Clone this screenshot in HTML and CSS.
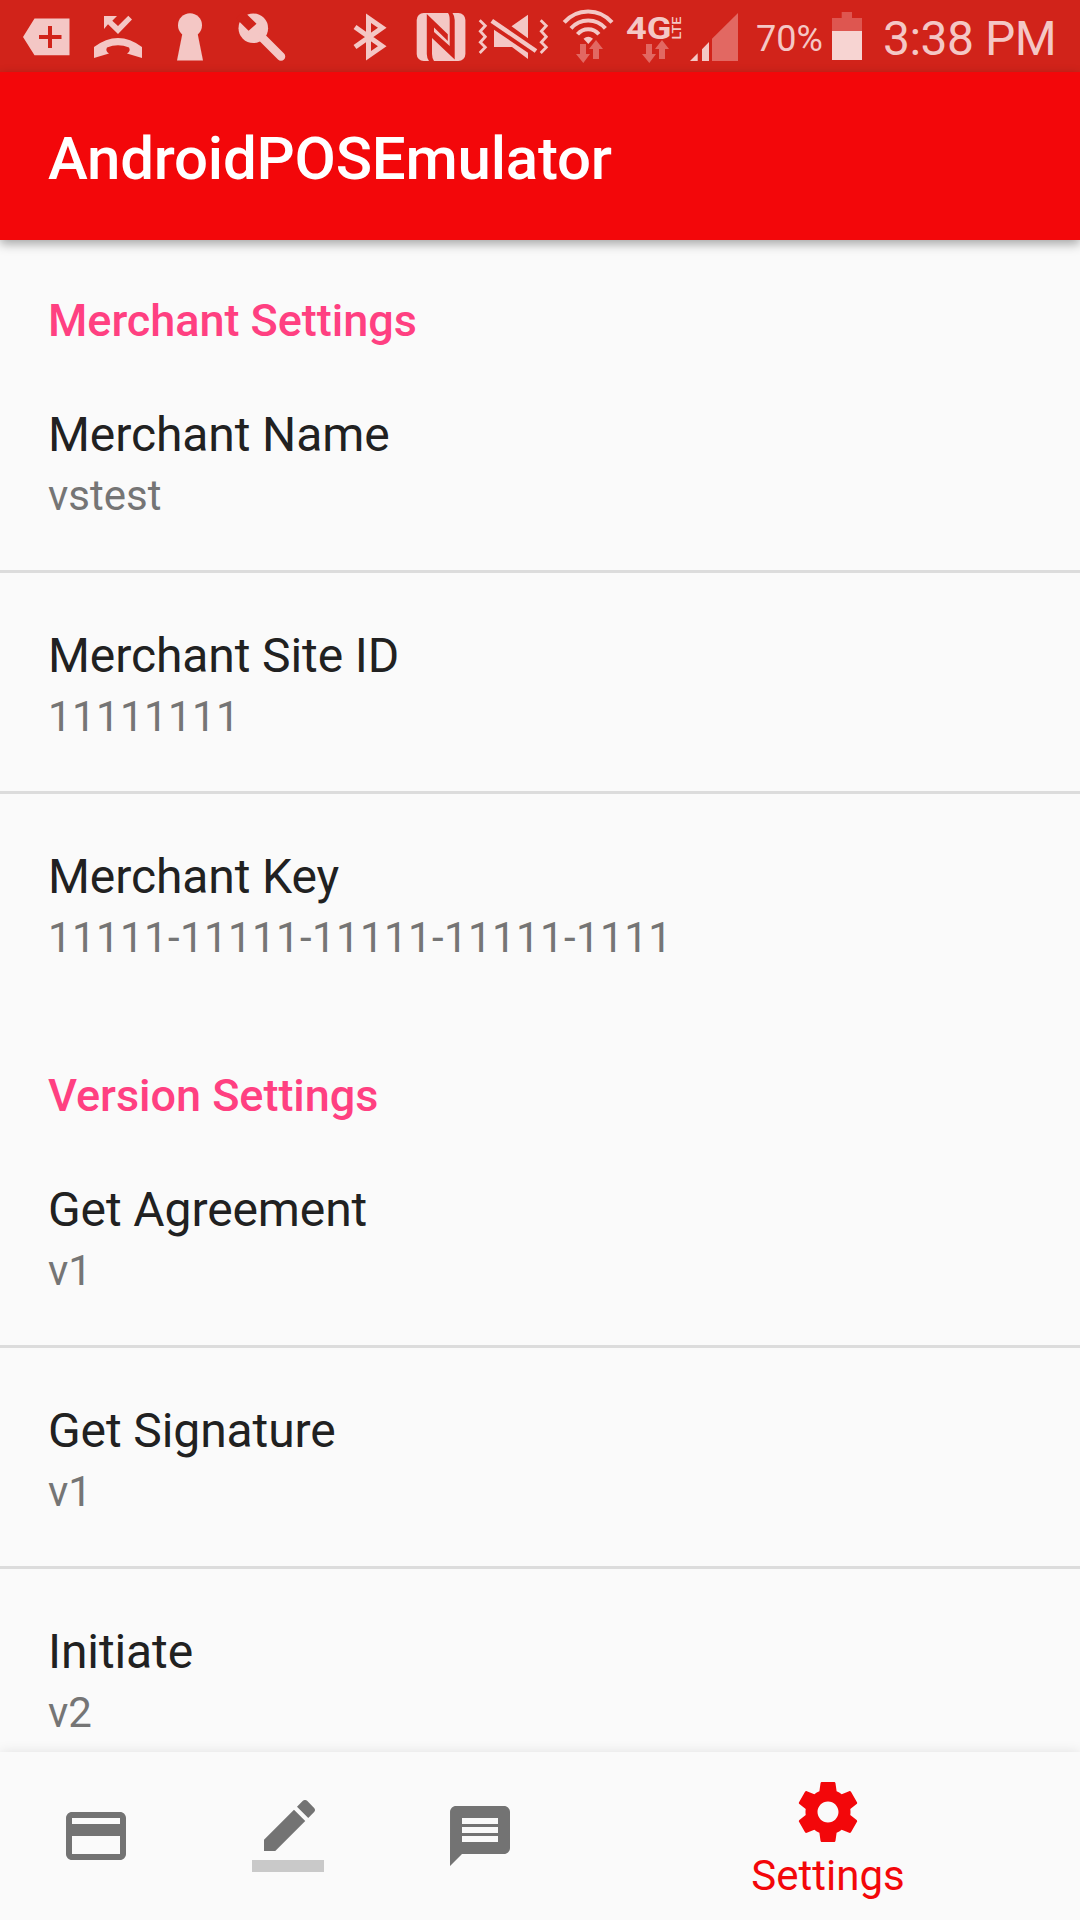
FILE: index.html
```html
<!DOCTYPE html>
<html lang="en">
<head>
<meta charset="utf-8">
<title>AndroidPOSEmulator</title>
<link rel="stylesheet" href="styles.css">
</head>
<body>
<div class="screen">
  <header class="status-bar">
    <svg class="status-icon" width="85" height="72" viewBox="0 0 85 72"><path fill-rule="evenodd" d="M23 37 34.5 18.5H69.5V55.3H34.5ZM48 26V35H39V39H48V48H52V39H61.5V35H52V26Z"/></svg>
    <svg class="status-icon" width="75" height="72" viewBox="85 0 75 72"><path d="M104 16H117L112.3 20.7 118 26 128.3 15.7 132 19.5 118 34 108 24.2 104 29Z"/><path d="M94 58V47Q118 29 142 47V58L127 53.5Q131 51 129 47.5Q118 43 107 47.5Q105 51 109 53.5Z"/></svg>
    <svg class="status-icon" width="60" height="72" viewBox="160 0 60 72"><circle cx="190" cy="25.3" r="12"/><path d="M182.5 33H197.5L203 60.5H177Z"/></svg>
    <svg class="status-icon" width="110" height="72" viewBox="220 0 110 72"><circle cx="253.3" cy="28.3" r="14.8"/><path class="stroke" stroke-width="8.5" stroke-linecap="round" d="M262 37.5 281 56.5"/><path class="cutout" d="M240.2 22.5 248.6 30.7 256.5 23.7 247.3 14.7 246 10 236 18Z"/></svg>
    <svg class="status-icon" width="70" height="72" viewBox="330 0 70 72"><path class="stroke" stroke-width="5" d="M355 47 382.2 27.8 368.5 18.2V55.8L382.2 46.2 355 27"/></svg>
    <svg class="status-icon" width="75" height="72" viewBox="400 0 75 72"><rect x="416.7" y="13" width="48.7" height="48" rx="7"/><path class="cutout" d="M426.8 14 447.8 34.3V41L434 27.5V32L449.7 46V20Q449.7 15 448 13H452.5Q454.7 16 454.7 20V59.5L432 38V54Q432 58 434 61H429Q426.8 58 426.8 54Z"/></svg>
    <svg class="status-icon" width="80" height="72" viewBox="475 0 80 72"><path class="stroke" stroke-width="2.8" d="M479.7 20.3 485.3 25.7 480.3 31.3 485.3 36.7 480.3 42.3 485.3 47.3 479.7 53M540.7 20.3 546.3 25.7 541.3 31.3 546.3 36.7 541.3 42.3 546.3 47.3 540.7 53"/><path d="M494 29.7 528 52.8V59L512 47H494ZM511.5 26.3 528 14.7V38.3Z"/><path class="stroke" stroke-width="4.5" d="M491.8 20.8 536 51"/></svg>
    <svg class="status-icon" width="65" height="72" viewBox="555 0 65 72"><path class="stroke" stroke-width="4" d="M564.2 22.4A31.5 31.5 0 0 1 612 22.4M571 28.4A22.7 22.7 0 0 1 605.4 28.4M577.5 34.2A14 14 0 0 1 598.9 34.2"/><path d="M583.5 38.8Q588.3 34.5 593 38.8L588.3 44Z"/><path class="faint" d="M580 44H586V54H590L583.3 63 576 54H580ZM593 59V49H589L596 40 603 49H599V59Z"/></svg>
    <svg class="status-icon" width="65" height="72" viewBox="620 0 65 72"><text class="network" x="626" y="39" textLength="45.5" lengthAdjust="spacingAndGlyphs">4G</text><text class="network-type" transform="translate(681 39.5) rotate(-90)" textLength="23" lengthAdjust="spacingAndGlyphs">LTE</text><path class="faint" d="M646 44H652V54H656L649.3 63 642 54H646ZM659 59V49H655L662 40 669 49H665V59Z"/></svg>
    <svg class="status-icon" width="65" height="72" viewBox="685 0 65 72"><path d="M690 61 697.7 53.3V61ZM702 61V49.3L709 42V61Z"/><path class="faint" d="M712 61V38.7L738 13V61Z"/></svg>
    <span class="battery-level">70%</span>
    <svg class="status-icon" width="48" height="72" viewBox="826 0 48 72"><path class="battery-empty" d="M832 18H841.7V12H852V18H862V31H832Z"/><path class="battery-full" d="M832 31H862V60H832Z"/></svg>
    <span class="clock">3:38 PM</span>
  </header>
  <div class="app-bar"><h1 class="app-title">AndroidPOSEmulator</h1></div>
  <main class="settings">
    <section class="group">
      <h2 class="group-title">Merchant Settings</h2>
      <div class="row"><div class="row-title">Merchant Name</div><div class="row-value">vstest</div></div>
      <div class="row"><div class="row-title">Merchant Site ID</div><div class="row-value numeric">11111111</div></div>
      <div class="row"><div class="row-title">Merchant Key</div><div class="row-value numeric">11111-11111-11111-11111-1111</div></div>
    </section>
    <section class="group">
      <h2 class="group-title">Version Settings</h2>
      <div class="row"><div class="row-title">Get Agreement</div><div class="row-value">v1</div></div>
      <div class="row"><div class="row-title">Get Signature</div><div class="row-value">v1</div></div>
      <div class="row"><div class="row-title">Initiate</div><div class="row-value">v2</div></div>
    </section>
  </main>
  <nav class="bottom-nav">
    <a class="nav-item"><svg class="nav-icon" viewBox="0 0 24 24"><path d="M20 4H4c-1.11 0-1.99.89-1.99 2L2 18c0 1.11.89 2 2 2h16c1.11 0 2-.89 2-2V6c0-1.11-.89-2-2-2zm0 14H4v-6h16v6zm0-10H4V6h16v2z"/></svg></a>
    <a class="nav-item"><svg class="nav-icon" viewBox="0 0 24 24"><path d="M17.75 7L14 3.25l-10 10V17h3.75l10-10zm2.96-2.96c.39-.39.39-1.02 0-1.41L18.37.29c-.39-.39-1.02-.39-1.41 0L15 2.25 18.75 6l1.96-1.96z"/><path fill-opacity=".36" d="M0 20h24v4H0z"/></svg></a>
    <a class="nav-item"><svg class="nav-icon" viewBox="0 0 24 24"><path d="M20 2H4c-1.1 0-1.99.9-1.99 2L2 22l4-4h14c1.1 0 2-.9 2-2V4c0-1.1-.9-2-2-2zm-2 12H6v-2h12v2zm0-3H6V9h12v2zm0-3H6V6h12v2z"/></svg></a>
    <a class="nav-item active"><svg class="nav-icon" viewBox="0 0 24 24"><path d="M19.43 12.98c.04-.32.07-.64.07-.98s-.03-.66-.07-.98l2.11-1.65c.19-.15.24-.42.12-.64l-2-3.46c-.12-.22-.39-.3-.61-.22l-2.49 1c-.52-.4-1.08-.73-1.69-.98l-.38-2.65C14.46 2.18 14.25 2 14 2h-4c-.25 0-.46.18-.49.42l-.38 2.65c-.61.25-1.17.59-1.69.98l-2.49-1c-.23-.09-.49 0-.61.22l-2 3.46c-.13.22-.07.49.12.64l2.11 1.65c-.04.32-.07.65-.07.98s.03.66.07.98l-2.11 1.65c-.19.15-.24.42-.12.64l2 3.46c.12.22.39.3.61.22l2.49-1c.52.4 1.08.73 1.69.98l.38 2.65c.03.24.24.42.49.42h4c.25 0 .46-.18.49-.42l.38-2.65c.61-.25 1.17-.59 1.69-.98l2.49 1c.23.09.49 0 .61-.22l2-3.46c.12-.22.07-.49-.12-.64l-2.11-1.65zM12 15.5c-1.93 0-3.5-1.57-3.5-3.5s1.57-3.5 3.5-3.5 3.5 1.57 3.5 3.5-1.57 3.5-3.5 3.5z"/></svg><span class="nav-label">Settings</span></a>
  </nav>
</div>
</body>
</html>
```
FILE: styles.css
```css
* { box-sizing: border-box; margin: 0; padding: 0; }

body {
  background: #fafafa;
  font-family: Roboto, "Liberation Sans", sans-serif;
}

.screen {
  width: 1080px;
  height: 1920px;
  display: flex;
  flex-direction: column;
  overflow: hidden;
}

.status-bar {
  flex: none;
  height: 72px;
  display: flex;
  background: #d1231a;
  color: #f4c7c5;
}

.status-icon { flex: none; display: block; fill: #f4c7c5; }
.stroke { fill: none; stroke: #f4c7c5; }
.cutout { fill: #d1231a; }
.faint { fill: #e26862; }
.network { font-size: 31px; font-weight: 700; }
.network-type { font-size: 12px; font-weight: 500; }
.battery-empty { fill: #de5650; }
.battery-full { fill: #f7d4d2; }

.battery-level {
  width: 76px;
  padding-left: 6px;
  font-size: 36px;
  line-height: 78px;
  white-space: nowrap;
}

.clock {
  padding-left: 9px;
  font-size: 48px;
  letter-spacing: -.5px;
  line-height: 78px;
  white-space: nowrap;
}

.app-bar {
  flex: none;
  height: 168px;
  display: flex;
  align-items: center;
  padding: 5px 48px 0;
  background: #f3070a;
  box-shadow: 0 4px 10px rgba(0, 0, 0, .34);
}

.app-title {
  color: #fff;
  font-size: 60px;
  font-weight: 500;
  letter-spacing: -.22px;
  line-height: 70px;
}

.settings { flex: 1; min-height: 0; overflow: hidden; margin-top: 16px; }
.group { height: 775px; }
.group:first-child { margin-top: -16px; }

.group-title {
  height: 112px;
  padding: 54px 48px 0;
  color: #ff4081;
  font-size: 45px;
  font-weight: 500;
  letter-spacing: -.04px;
  line-height: 53px;
}

.row {
  height: 221px;
  padding: 55px 48px 0;
  border-bottom: 3px solid #dcdcdc;
}

.row:last-child { border-color: transparent; }
.row-title { color: #212121; font-size: 48px; letter-spacing: -.1px; line-height: 56px; }
.row-value { margin-top: 8px; color: #757575; font-size: 42px; line-height: 49px; }
.numeric { letter-spacing: .4px; }

.bottom-nav {
  flex: none;
  height: 168px;
  display: grid;
  grid-template-columns: 192px 192px 192px 504px;
  background: #fafafa;
  box-shadow: 0 0 12px rgba(0, 0, 0, .1);
}

.nav-item {
  display: flex;
  flex-direction: column;
  align-items: center;
  padding-top: 48px;
  color: #737373;
}

.nav-icon { width: 72px; height: 72px; fill: currentColor; }
.nav-item.active { padding-top: 24px; color: #f3070a; }
.nav-label { margin-top: 3px; font-size: 42px; line-height: 49px; }
```
